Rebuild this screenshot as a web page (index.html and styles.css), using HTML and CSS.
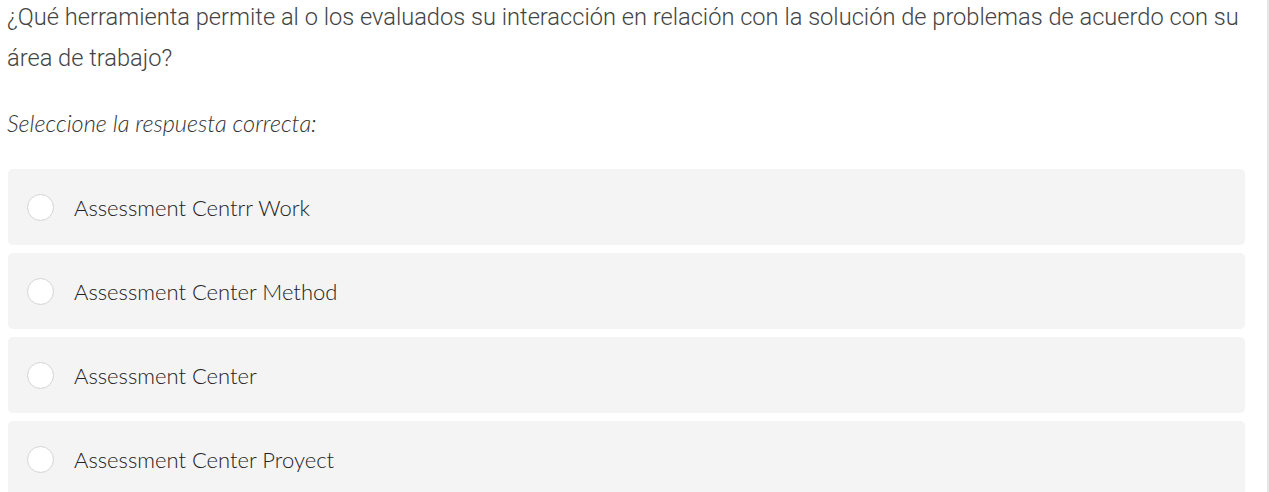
FILE: index.html
```html
<!DOCTYPE html>
<html lang="es">
  <head>
    <meta charset="UTF-8" />
    <meta name="viewport" content="width=device-width, initial-scale=1.0" />
    <link rel="stylesheet" href="styles.css">
    <title>Pregunta</title>
  </head>

  <body>
    <main class="quiz">
      <p class="quiz__question">
        ¿Qué herramienta permite al o los evaluados su interacción en relación con la solución de problemas de acuerdo con su área de trabajo?
      </p>
      <p class="quiz__hint">Seleccione la respuesta correcta:</p>
      <ul class="quiz__options">
        <li class="option">
          <span class="option__radio"></span>
          <span class="option__text">Assessment Centrr Work</span>
        </li>
        <li class="option">
          <span class="option__radio"></span>
          <span class="option__text">Assessment Center Method</span>
        </li>
        <li class="option">
          <span class="option__radio"></span>
          <span class="option__text">Assessment Center</span>
        </li>
        <li class="option">
          <span class="option__radio"></span>
          <span class="option__text">Assessment Center Proyect</span>
        </li>
      </ul>
    </main>
  </body>
</html>
```

FILE: styles.css
```css
html,
body {
  margin: 0;
  padding: 0;
  background-color: #fff;
}
.quiz {
  width: 1269px;
  height: 492px;
  overflow: hidden;
  border-right: 2px solid #e6e6e6;
  box-sizing: border-box;
  padding: 0 22px 0 8px;
}
.quiz__question {
  margin: -3px 0 0 -1px;
  font-family: "Roboto Light", Roboto, sans-serif;
  font-weight: 300;
  font-size: 23.65px;
  line-height: 41px;
  color: #444;
}
.quiz__hint {
  margin: 31px 0 0 -1px;
  font-family: Lato, sans-serif;
  font-weight: 300;
  font-style: italic;
  font-size: 23.5px;
  line-height: 26px;
  color: #333;
}
.quiz__options {
  list-style: none;
  margin: 33px 0 0;
  padding: 0;
  display: flex;
  flex-direction: column;
  gap: 8px;
}
.option {
  display: flex;
  align-items: center;
  height: 76px;
  border-radius: 5px;
  background-color: #f4f4f4;
  padding-left: 19px;
}
.option__radio {
  width: 25px;
  height: 25px;
  border: 1px solid #d4d4d4;
  border-radius: 50%;
  background-color: #fff;
  flex-shrink: 0;
}
.option__text {
  margin-left: 20px;
  font-family: Lato, sans-serif;
  font-weight: 300;
  font-size: 22px;
  color: #222;
}
```
